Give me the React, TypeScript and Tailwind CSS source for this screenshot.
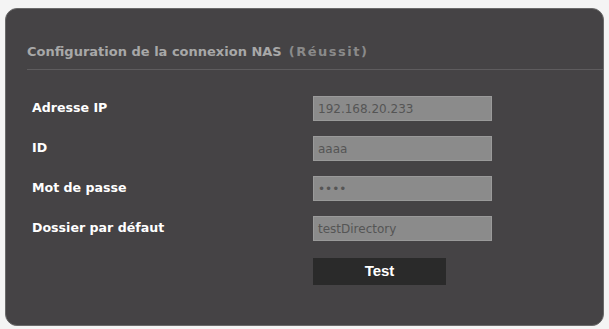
import React from "react";

const rows = [
  { label: "Adresse IP", value: "192.168.20.233" },
  { label: "ID", value: "aaaa" },
  { label: "Mot de passe", value: "••••" },
  { label: "Dossier par défaut", value: "testDirectory" },
];

export default function App() {
  return (
    <div className="w-[609px] h-[329px] bg-[#f4f4f4] pt-[8px] px-[5px] pb-[3px]" style={{ fontFamily: '"DejaVu Sans", Verdana, sans-serif' }}>
      <div className="h-[318px] rounded-[12px] bg-[#454345] border border-[#6a6a6a] flex flex-col">
        <div className="pl-[21px] pt-[33px] h-[20px] box-content text-[13px] font-bold leading-[20px] text-[#a8a8a8] flex items-center gap-[7px]">
          <span>Configuration de la connexion NAS</span>
          <span className="text-[#8a8a8a] font-bold tracking-[1.5px]">(Réussit)</span>
        </div>
        <div className="mt-[7px] ml-[21px] h-px bg-[#5e5c5e]" />
        <div className="mt-[26px] pl-[26px] grid grid-cols-[281px_179px] gap-y-[15px]">
          {rows.map((r) => (
            <React.Fragment key={r.label}>
              <div className="h-[25px] flex items-center text-[12.6px] font-bold text-white">{r.label}</div>
              <div className="h-[25px] bg-[#8b8b8b] border border-[#9a9a9a] flex items-center pl-[4px] text-[12px] text-[#555] leading-none">
                {r.value}
              </div>
            </React.Fragment>
          ))}
          <div />
          <div className="mt-[2px] w-[133px] h-[27px] bg-[#2a2a2a] flex items-center justify-center text-[15px] font-bold text-white" style={{ fontFamily: '"Liberation Sans", Arial, sans-serif' }}>
            Test
          </div>
        </div>
      </div>
    </div>
  );
}
